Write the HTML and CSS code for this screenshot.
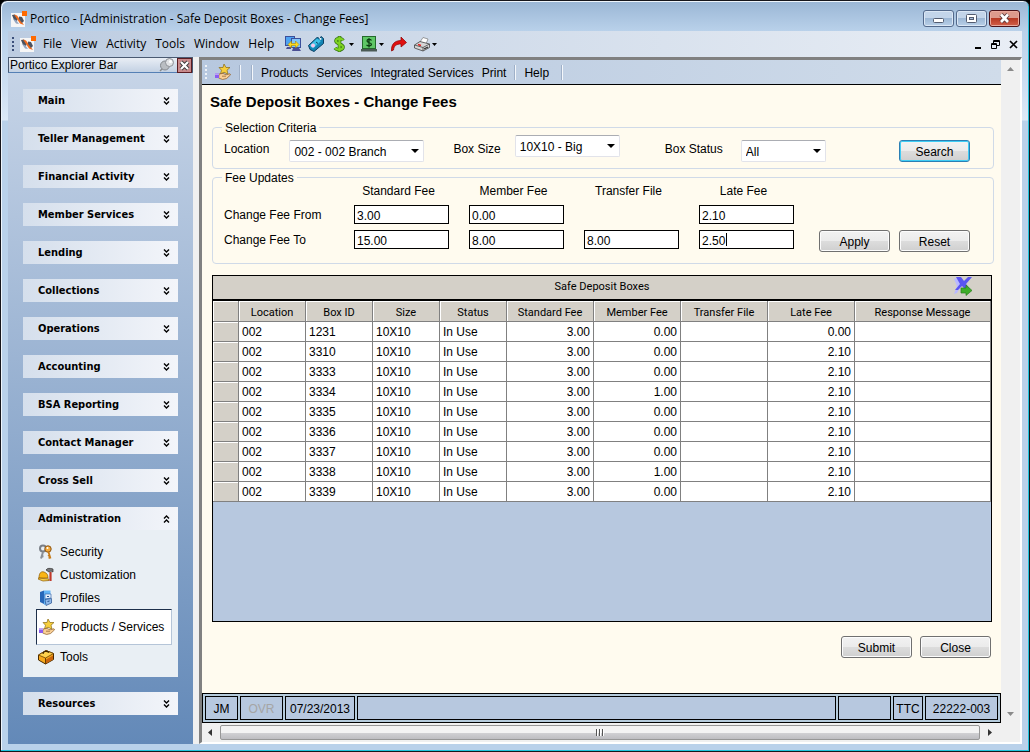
FILE: index.html
```
<!DOCTYPE html>
<html lang="en">
<head>
    <meta charset="UTF-8">
    <meta name="viewport" content="width=device-width, initial-scale=1.0">
    <title>Portico - Safe Deposit Boxes - Change Fees</title>
    <link rel="stylesheet" href="styles.css">
</head>
<body>
    <svg class="defs" width="0" height="0" aria-hidden="true">
        <symbol id="logo" viewBox="0 0 16 16">
            <rect x="0" y="2" width="14" height="14" fill="#f6f6f6"/>
            <path d="M1 4l3-.5 3 3.500-1 3-3-1z" fill="#4c525e"/>
            <path d="M2 8l3 1 3 4-3-.5z" fill="#93a5c0"/>
            <path d="M3 3.500l3 1 7 9.500-4-1.500z" fill="#f26a1b"/>
            <path d="M8 5.500l3 .5 2 4-2 2-3-4z" fill="#4c525e"/>
            <rect x="11" y="0" width="5" height="5" fill="#ff6a00"/>
        </symbol>
        <symbol id="star-hand" viewBox="0 0 16 16">
            <path d="M9 0l2 3.500h4l-3 2.700 1 4L9 8.200 5.500 10l1-3.800L4 3.500h4z" fill="#f7cf3d" stroke="#8a6a14" stroke-width=".7"/>
            <path d="M4 10l4-.6 3 1.400 4-1 .6 1-4 3.700-4 1-4-1.500z" fill="#f9cf96" stroke="#8a5a28" stroke-width=".7"/>
            <path d="M7 12.200h4" stroke="#8a5a28" stroke-width=".7"/>
            <rect x="0" y="9.500" width="4" height="4.500" fill="#8b5cf0"/>
            <rect x="0" y="9.500" width="4" height="1.500" fill="#b9a0f6"/>
        </symbol>
        <symbol id="chev-down" viewBox="0 0 7 8">
            <path d="M1 .5l2.500 2.500L6 .5M1 4.500L3.500 7 6 4.500" fill="none" stroke="#000" stroke-width="1.400"/>
        </symbol>
        <symbol id="chev-up" viewBox="0 0 7 8">
            <path d="M1 3.500L3.500 1 6 3.500M1 7.500L3.500 5 6 7.500" fill="none" stroke="#000" stroke-width="1.400"/>
        </symbol>
        <symbol id="arrow" viewBox="0 0 5 3">
            <path d="M0 0h5L2.500 3z" fill="#000"/>
        </symbol>
    </svg>

    <div class="window">
        <header class="title-bar">
            <svg class="icon"><use href="#logo"/></svg>
            <span class="title-text">Portico - [Administration - Safe Deposit Boxes - Change Fees]</span>
            <div class="window-buttons">
                <button class="window-button" aria-label="Minimize">
                    <svg width="29" height="15" viewBox="0 0 29 15"><rect x="9.500" y="7.500" width="10" height="4" rx="1" fill="#fff" stroke="#535c70"/></svg>
                </button>
                <button class="window-button" aria-label="Maximize">
                    <svg width="29" height="15" viewBox="0 0 29 15"><rect x="9.500" y="3.500" width="10" height="8" rx="1" fill="#fff" stroke="#535c70"/><rect x="12.500" y="6.500" width="4" height="2" fill="#a8bedb" stroke="#535c70"/></svg>
                </button>
                <button class="window-button close" aria-label="Close window">
                    <svg width="29" height="15" viewBox="0 0 29 15"><path d="M11 3.500l7 7.500M18 3.500l-7 7.500" stroke="#5b3a3c" stroke-width="4.500"/><path d="M11 3.500l7 7.500M18 3.500l-7 7.500" stroke="#fff" stroke-width="2.600"/></svg>
                </button>
            </div>
        </header>

        <nav class="menu-bar" aria-label="Main menu">
            <span class="grip"></span>
            <svg class="icon"><use href="#logo"/></svg>
            <div class="menu">
                <button>File</button>
                <button>View</button>
                <button>Activity</button>
                <button>Tools</button>
                <button>Window</button>
                <button>Help</button>
            </div>
            <div class="tools">
                <button aria-label="Transfer">
                    <svg class="icon" viewBox="0 0 16 16">
                        <rect x=".5" y=".5" width="9" height="9" fill="#4fa3f2" stroke="#3b4f9b"/>
                        <rect x="6.500" y="2.500" width="9" height="9" fill="#7fc4fa" stroke="#3b4f9b"/>
                        <path d="M2 11h4v2H1zM8 12h6l2 3H7z" fill="#4b4f94"/>
                        <path d="M3 8.500L6.500 5v2.500h4V5L14 8.500 10.500 12V9.500h-4V12z" fill="#ffd91a" stroke="#9c7a00" stroke-width=".5"/>
                    </svg>
                </button>
                <button aria-label="Tag">
                    <svg class="icon" viewBox="0 0 16 16">
                        <path d="M.5 9.500L9 1.500l3 1 1-2 2.500 2v5L6 15.500l-4-2z" fill="#1284b4" stroke="#0b3f63"/>
                        <path d="M1.500 9.500l7.500-7 4 2.500-8 7.500z" fill="#3fc0e4"/>
                        <circle cx="5" cy="9.500" r="2" fill="#f6c6e8"/>
                        <path d="M8 6l2 1.500" stroke="#0b3f63"/>
                        <path d="M11 1l3 2-2 1z" fill="#fff"/>
                    </svg>
                </button>
                <button aria-label="Money">
                    <svg class="icon" viewBox="0 0 16 16">
                        <path d="M12 4.500C11 2 5 2 5 5s7 3 7 6-6 3.500-8 1M8.500 0v16" fill="none" stroke="#2f6b12" stroke-width="3.600"/>
                        <path d="M12 4.500C11 2 5 2 5 5s7 3 7 6-6 3.500-8 1M8.500 .5v15" fill="none" stroke="#7ed321" stroke-width="2.200"/>
                    </svg>
                    <svg class="arrow"><use href="#arrow"/></svg>
                </button>
                <button aria-label="Cash">
                    <svg class="icon" viewBox="0 0 16 16">
                        <rect x="1.500" y=".5" width="13" height="12" fill="#5fc767" stroke="#24692c"/>
                        <path d="M10.500 4.500C9.500 3 6 3 6 5s4.500 1.500 4.500 3.300S7 10.300 5.500 9M8 2v9.500" fill="none" stroke="#0c3c12" stroke-width="1.200"/>
                        <path d="M0 13h16v2.500H0z" fill="#4a5a55"/>
                    </svg>
                    <svg class="arrow"><use href="#arrow"/></svg>
                </button>
                <button aria-label="Go to">
                    <svg class="icon" viewBox="0 0 16 16"><path d="M.5 15C0 8 4 4.500 10 4.500V1l5.500 5.500L10 11V8C5 8 3 10 2.500 14z" fill="#e01010" stroke="#8c0000" stroke-width=".7"/></svg>
                </button>
                <button aria-label="Print">
                    <svg class="icon" viewBox="0 0 16 16">
                        <path d="M6 6l3-4.500 5 1.500-2 5z" fill="#fff" stroke="#777" stroke-width=".7"/>
                        <path d="M.5 9L6 5.500l9.500 2.500v3.500L9 15 .5 12z" fill="#d6d6d6" stroke="#444" stroke-width=".8"/>
                        <path d="M.5 9L9 11.500l6.500-3.500M9 11.500V15" fill="none" stroke="#444" stroke-width=".8"/>
                        <path d="M4 8.500l3 1" stroke="#e02020" stroke-width="1.500"/>
                        <path d="M10 13l4-2" stroke="#2a2a2a" stroke-width="1.200"/>
                    </svg>
                    <svg class="arrow"><use href="#arrow"/></svg>
                </button>
            </div>
            <div class="child-buttons">
                <button aria-label="Minimize form"><svg width="9" height="9"><path d="M2 7h6v2H2z"/></svg></button>
                <button aria-label="Restore form"><svg width="9" height="9"><path d="M2.500 3V.5h6v5H6M2 1.500h7M.5 3.500h5v5h-5zM0 4.500h6" fill="none" stroke="#000"/></svg></button>
                <button aria-label="Close form"><svg width="9" height="9"><path d="M1 1l7 7M8 1L1 8" stroke="#000" stroke-width="1.700"/></svg></button>
            </div>
        </nav>

        <div class="content">
            <aside class="explorer">
                <div class="explorer-title">
                    <span>Portico Explorer Bar</span>
                    <button class="pin" aria-label="Pin">
                        <svg width="16" height="14" viewBox="0 0 16 14">
                            <path d="M4 10L1 13" stroke="#888" stroke-width="1.500"/>
                            <ellipse cx="6" cy="7.500" rx="4.500" ry="4.500" fill="#b9bdc2" stroke="#85898f"/>
                            <circle cx="10.500" cy="4.500" r="4" fill="#e1e3e6" stroke="#8d9197"/>
                            <circle cx="11.500" cy="3.500" r="1.500" fill="#fff"/>
                        </svg>
                    </button>
                    <button class="explorer-close" aria-label="Close explorer bar">
                        <svg width="13" height="13" viewBox="0 0 13 13"><path d="M3 3l7 7M10 3l-7 7" stroke="#3c3c3c" stroke-width="4"/><path d="M3 3l7 7M10 3l-7 7" stroke="#fff" stroke-width="2.200"/></svg>
                    </button>
                </div>
                <div class="groups">
                    <button class="group">Main<svg class="chevron"><use href="#chev-down"/></svg></button>
                    <button class="group">Teller Management<svg class="chevron"><use href="#chev-down"/></svg></button>
                    <button class="group">Financial Activity<svg class="chevron"><use href="#chev-down"/></svg></button>
                    <button class="group">Member Services<svg class="chevron"><use href="#chev-down"/></svg></button>
                    <button class="group">Lending<svg class="chevron"><use href="#chev-down"/></svg></button>
                    <button class="group">Collections<svg class="chevron"><use href="#chev-down"/></svg></button>
                    <button class="group">Operations<svg class="chevron"><use href="#chev-down"/></svg></button>
                    <button class="group">Accounting<svg class="chevron"><use href="#chev-down"/></svg></button>
                    <button class="group">BSA Reporting<svg class="chevron"><use href="#chev-down"/></svg></button>
                    <button class="group">Contact Manager<svg class="chevron"><use href="#chev-down"/></svg></button>
                    <button class="group">Cross Sell<svg class="chevron"><use href="#chev-down"/></svg></button>
                    <div>
                        <button class="group">Administration<svg class="chevron"><use href="#chev-up"/></svg></button>
                        <div class="group-body">
                            <a href="#">
                                <svg class="icon" viewBox="0 0 16 16">
                                    <circle cx="5" cy="4.500" r="3" fill="none" stroke="#7a7f86" stroke-width="2"/>
                                    <path d="M5 8L3 14.500M3.500 12l2 .5" stroke="#8a8f96" stroke-width="2"/>
                                    <circle cx="10" cy="5" r="3.200" fill="#f3a93a" stroke="#8e5410"/>
                                    <circle cx="9.500" cy="4" r="1" fill="#fff"/>
                                    <path d="M10.500 8l2 6.500M12 11l-2 1M12.500 13.500l-2 .5" stroke="#c77a16" stroke-width="1.800"/>
                                </svg>
                                Security
                            </a>
                            <a href="#">
                                <svg class="icon" viewBox="0 0 16 16">
                                    <path d="M1 11C1 6 3 4 6 5s4 3 4 6z" fill="#f9b516" stroke="#8c5a00" stroke-width=".7"/>
                                    <path d="M0 11l5 .5 6 .5v1.500L5 14l-5-2z" fill="#fbd04a" stroke="#8c5a00" stroke-width=".7"/>
                                    <path d="M8 3c1-2 4-2 7-1v3l-2-1-2 1z" fill="#777" stroke="#333" stroke-width=".7"/>
                                    <path d="M12.500 5v9" stroke="#c0392b" stroke-width="2.200"/>
                                </svg>
                                Customization
                            </a>
                            <a href="#">
                                <svg class="icon" viewBox="0 0 16 16">
                                    <path d="M2 2l4-1.500v13.500L2 12z" fill="#2766b8"/>
                                    <path d="M6 .5h6.500v12L6 15z" fill="#64b4f5"/>
                                    <path d="M7 4h6v4l-6 1z" fill="#e3eefb" stroke="#3b6cb0" stroke-width=".7"/>
                                    <path d="M7 9.500l6.500-1V13L8 15.500z" fill="#8fb8e9" stroke="#27518f" stroke-width=".7"/>
                                    <path d="M9 6.500h2M9.500 11.500l2-.5" stroke="#27518f"/>
                                </svg>
                                Profiles
                            </a>
                            <a href="#" class="current">
                                <svg class="icon"><use href="#star-hand"/></svg>
                                Products / Services
                            </a>
                            <a href="#">
                                <svg class="icon" viewBox="0 0 16 16">
                                    <path d="M.5 6L8 1.500l7.500 3v6L7.500 15 .5 11z" fill="#f7a81b" stroke="#4a2a00"/>
                                    <path d="M.5 6l7 3 8-4.500L8 1.500z" fill="#ffd24d" stroke="#6b3f00" stroke-width=".8"/>
                                    <path d="M7.500 9v6" stroke="#6b3f00"/>
                                    <path d="M5 5c0-2 3-4 6-1.500" fill="none" stroke="#3a2200" stroke-width="1.200"/>
                                    <path d="M8 10.500l7-4v4L8 14.500z" fill="#c9640c"/>
                                </svg>
                                Tools
                            </a>
                        </div>
                    </div>
                    <button class="group">Resources<svg class="chevron"><use href="#chev-down"/></svg></button>
                </div>
            </aside>

            <main class="form">
                <div class="form-page">
                    <div class="form-toolbar">
                        <span class="grip light"></span>
                        <svg class="icon"><use href="#star-hand"/></svg>
                        <span class="divider"></span>
                        <span class="divider"></span>
                        <div class="form-menu">
                            <button>Products</button>
                            <button>Services</button>
                            <button>Integrated Services</button>
                            <button>Print</button>
                        </div>
                        <span class="divider"></span>
                        <button>Help</button>
                        <span class="divider last"></span>
                    </div>

                    <div class="form-body">
                        <h1>Safe Deposit Boxes - Change Fees</h1>

                        <fieldset class="criteria">
                            <legend>Selection Criteria</legend>
                            <div class="criteria-row">
                                <label for="location">Location</label>
                                <span class="select location"><select id="location"><option>002 - 002 Branch</option></select></span>
                                <label for="boxSize">Box Size</label>
                                <span class="select size"><select id="boxSize"><option>10X10 - Big</option></select></span>
                                <label for="boxStatus">Box Status</label>
                                <span class="select status"><select id="boxStatus"><option>All</option></select></span>
                                <button class="btn focused">Search</button>
                            </div>
                        </fieldset>

                        <fieldset class="updates">
                            <legend>Fee Updates</legend>
                            <div class="fees">
                                <div class="fee-grid">
                                    <span></span>
                                    <span class="fee-name" id="std">Standard Fee</span>
                                    <span class="fee-name" id="mem">Member Fee</span>
                                    <span class="fee-name" id="trn">Transfer File</span>
                                    <span class="fee-name" id="late">Late Fee</span>

                                    <span id="from">Change Fee From</span>
                                    <input type="text" aria-labelledby="from std" value="3.00">
                                    <input type="text" aria-labelledby="from mem" value="0.00">
                                    <span></span>
                                    <input type="text" aria-labelledby="from late" value="2.10">

                                    <span id="to">Change Fee To</span>
                                    <input type="text" aria-labelledby="to std" value="15.00">
                                    <input type="text" aria-labelledby="to mem" value="8.00">
                                    <input type="text" aria-labelledby="to trn" value="8.00">
                                    <span class="editing"><input type="text" aria-labelledby="to late" value="2.50"></span>
                                </div>
                                <div class="fee-buttons">
                                    <button class="btn">Apply</button>
                                    <button class="btn">Reset</button>
                                </div>
                            </div>
                        </fieldset>

                        <section class="boxes">
                            <div class="boxes-title">
                                <span>Safe Deposit Boxes</span>
                                <button class="export" aria-label="Export">
                                    <svg width="20" height="20" viewBox="0 0 20 20">
                                        <path d="M1 3l5-2 4 5-6 11-3 1 3-8z" fill="#b9b9ff"/>
                                        <path d="M3 1h5l3 4 4-4h4l-6 7 4 5h-5l-3-3-4 4H2l5-6z" fill="#5a54f2"/>
                                        <path d="M8 12h5V9l6 5.500-6 5V17H8z" fill="#3fae2a" stroke="#2a7d1c" stroke-width=".7"/>
                                    </svg>
                                </button>
                            </div>
                            <table>
                                <colgroup>
                                    <col class="c-head"><col class="c-text"><col class="c-text"><col class="c-text"><col class="c-text"><col class="c-fee"><col class="c-fee"><col class="c-fee"><col class="c-fee"><col>
                                </colgroup>
                                <thead>
                                    <tr><th></th><th>Location</th><th>Box ID</th><th>Size</th><th>Status</th><th>Standard Fee</th><th>Member Fee</th><th>Transfer File</th><th>Late Fee</th><th>Response Message</th></tr>
                                </thead>
                                <tbody>
                                    <tr><th></th><td>002</td><td>1231</td><td>10X10</td><td>In Use</td><td class="num">3.00</td><td class="num">0.00</td><td></td><td class="num">0.00</td><td></td></tr>
                                    <tr><th></th><td>002</td><td>3310</td><td>10X10</td><td>In Use</td><td class="num">3.00</td><td class="num">0.00</td><td></td><td class="num">2.10</td><td></td></tr>
                                    <tr><th></th><td>002</td><td>3333</td><td>10X10</td><td>In Use</td><td class="num">3.00</td><td class="num">0.00</td><td></td><td class="num">2.10</td><td></td></tr>
                                    <tr><th></th><td>002</td><td>3334</td><td>10X10</td><td>In Use</td><td class="num">3.00</td><td class="num">1.00</td><td></td><td class="num">2.10</td><td></td></tr>
                                    <tr><th></th><td>002</td><td>3335</td><td>10X10</td><td>In Use</td><td class="num">3.00</td><td class="num">0.00</td><td></td><td class="num">2.10</td><td></td></tr>
                                    <tr><th></th><td>002</td><td>3336</td><td>10X10</td><td>In Use</td><td class="num">3.00</td><td class="num">0.00</td><td></td><td class="num">2.10</td><td></td></tr>
                                    <tr><th></th><td>002</td><td>3337</td><td>10X10</td><td>In Use</td><td class="num">3.00</td><td class="num">0.00</td><td></td><td class="num">2.10</td><td></td></tr>
                                    <tr><th></th><td>002</td><td>3338</td><td>10X10</td><td>In Use</td><td class="num">3.00</td><td class="num">1.00</td><td></td><td class="num">2.10</td><td></td></tr>
                                    <tr><th></th><td>002</td><td>3339</td><td>10X10</td><td>In Use</td><td class="num">3.00</td><td class="num">0.00</td><td></td><td class="num">2.10</td><td></td></tr>
                                </tbody>
                            </table>
                        </section>

                        <div class="form-actions">
                            <button class="btn">Submit</button>
                            <button class="btn">Close</button>
                        </div>
                    </div>

                    <footer class="status-bar">
                        <span class="s-user">JM</span>
                        <span class="s-ovr">OVR</span>
                        <span class="s-date">07/23/2013</span>
                        <span class="s-message"></span>
                        <span class="s-blank"></span>
                        <span class="s-mode">TTC</span>
                        <span class="s-branch">22222-003</span>
                    </footer>
                </div>

                <div class="v-scroll">
                    <svg width="7" height="4"><path d="M0 4h7L3.500 0z" fill="#8a8a8a"/></svg>
                    <svg width="7" height="4"><path d="M0 0h7L3.500 4z" fill="#8a8a8a"/></svg>
                </div>
                <div class="h-scroll">
                    <svg width="4" height="7"><path d="M4 0v7L0 3.500z" fill="#333"/></svg>
                    <div class="thumb"><i></i><i></i><i></i></div>
                    <svg width="4" height="7"><path d="M0 0v7l4-3.500z" fill="#333"/></svg>
                </div>
            </main>
        </div>
    </div>
</body>
</html>
```
FILE: styles.css
```
* {
    box-sizing: border-box;
}
body {
    margin: 0;
    background: #000;
    font-family: "Liberation Sans", Arial, sans-serif;
    font-size: 12px;
    line-height: 16px;
    color: #000;
}
button {
    background: none;
    border: none;
    padding: 0;
    font: inherit;
    color: inherit;
    cursor: pointer;
}
a {
    color: inherit;
    text-decoration: none;
}
svg {
    display: block;
    flex: none;
}
.defs {
    position: absolute;
}
.icon {
    width: 16px;
    height: 16px;
}

/* window frame */
.window {
    display: flex;
    flex-direction: column;
    min-height: 100vh;
    border: 1px solid #16161c;
    border-radius: 7px 7px 0 0;
    box-shadow: inset -1px -1px 0 #1fc3dd, inset 1px 1px 0 #eef5fc;
    background: linear-gradient(#9ab6d5, #b9d1ea 30px, #cfe0f3 90px, #dce9f7 119px, #b9d1ea 120px);
    padding: 1px 7px 7px;
}
.title-bar {
    display: flex;
    align-items: center;
    height: 29px;
    padding: 4px 2px 0 3px;
    font-family: "Open Sans", "Segoe UI", sans-serif;
}
.title-text {
    margin-left: 3px;
}
.window-buttons {
    display: flex;
    gap: 2px;
    margin-left: auto;
}
.window-button {
    border: 1px solid #53698b;
    border-radius: 3px;
    box-shadow: inset 0 0 0 1px #dbe7f5;
    background: linear-gradient(#c3d5ea 50%, #9db8d6 50%, #b9d0e8);
}
.window-button.close {
    border-color: #4c1218;
    box-shadow: inset 0 0 0 1px #e9a99c;
    background: linear-gradient(#dd9a8c 50%, #b83a24 50%, #d1604a);
}

/* main menu */
.menu-bar {
    display: flex;
    align-items: center;
    height: 26px;
    padding: 0 4px;
    background: linear-gradient(90deg, #bccce1, #e9eef5);
    font-family: "Open Sans", "Segoe UI", sans-serif;
}
.grip {
    width: 2px;
    height: 14px;
    margin-right: 6px;
    background: repeating-linear-gradient(#3b4f7a 0 2px, transparent 2px 4px);
}
.grip.light {
    margin-right: 8px;
    background: repeating-linear-gradient(#eef2f7 0 2px, transparent 2px 4px);
}
.menu {
    display: flex;
    gap: 9px;
    margin-left: 7px;
}
.tools {
    display: flex;
    gap: 7px;
    margin-left: 11px;
}
.tools button {
    display: flex;
    align-items: center;
    gap: 2px;
}
.arrow {
    width: 5px;
    height: 3px;
}
.child-buttons {
    display: flex;
    gap: 9px;
    margin-left: auto;
}
.content {
    display: flex;
    flex: 1;
    background: #f0f0f0;
}

/* explorer bar */
.explorer {
    display: flex;
    flex-direction: column;
    width: 185px;
    margin-right: 6px;
}
.explorer-title {
    display: flex;
    align-items: center;
    height: 16px;
    border: 1px solid #4a5a72;
    border-bottom-color: #5580b5;
    background: linear-gradient(#e9eef5, #c3d1e3);
    padding-left: 1px;
}
.explorer-close {
    margin-left: 2px;
    border: 1px solid #5a1c22;
    background: #c98a8c;
}
.pin {
    margin-left: auto;
}
.groups {
    display: flex;
    flex-direction: column;
    gap: 15px;
    flex: 1;
    padding: 16px 15px;
    background: linear-gradient(#c6d4e7, #6389b8);
}
.group {
    display: flex;
    align-items: center;
    justify-content: space-between;
    width: 100%;
    height: 23px;
    padding: 0 8px 0 15px;
    background: linear-gradient(90deg, #d5dfec, #f3f5fa);
    font-family: "DejaVu Sans Condensed", Tahoma, sans-serif;
    font-size: 11px;
    font-weight: bold;
}
.chevron {
    width: 7px;
    height: 8px;
}
.group-body {
    padding: 10px 6px 9px 13px;
    background: #e9eff4;
}
.group-body a {
    display: flex;
    align-items: center;
    gap: 6px;
    height: 23px;
    padding-left: 2px;
    white-space: nowrap;
}
.group-body a.current {
    height: 36px;
    border: 1px solid #b5c5d8;
    border-top-color: #1d2f4a;
    border-left-color: #1d2f4a;
    background: #fff;
}

/* form window */
.form {
    display: grid;
    grid-template-columns: 1fr 19px;
    grid-template-rows: 1fr 19px;
    flex: 1;
    border: solid #808080;
    border-width: 3px 0 0 3px;
    border-right: 2px solid #fff;
    border-bottom: 2px solid #fff;
}
.form-page {
    display: flex;
    flex-direction: column;
    background: #fffbef;
}
.form-toolbar {
    display: flex;
    align-items: center;
    height: 25px;
    padding-left: 3px;
    border-bottom: 1px solid #000;
    background: linear-gradient(90deg, #b7c8df, #d0dcea);
}
.form-toolbar button {
    padding-top: 2px;
}
.form-menu {
    display: flex;
    gap: 8px;
}
.divider {
    width: 2px;
    height: 15px;
    margin: 0 8px;
    border-left: 1px solid #9fb0c8;
    background: #f4f7fb;
}
.divider + .divider {
    margin-left: 2px;
}
.divider.last {
    margin-left: 12px;
}
.form-body {
    display: flex;
    flex-direction: column;
    flex: 1;
    padding: 9px 7px 0 10px;
}
h1 {
    margin: 0 0 9px -2px;
    font-size: 15px;
    line-height: 16px;
}
fieldset {
    min-width: 0;
    margin: 0;
    padding: 0 23px 0 11px;
    border: 1px solid #d0dae8;
    border-radius: 4px;
}
legend {
    margin-left: -2px;
    padding: 3px 3px 0;
    line-height: 13px;
}
.criteria {
    height: 50px;
}
.criteria-row {
    display: flex;
    align-items: flex-end;
    height: 27px;
}
.criteria-row label {
    align-self: center;
}
.select {
    position: relative;
    height: 22px;
}
.select::after {
    content: "";
    position: absolute;
    right: 5px;
    top: 9px;
    border: 4px solid transparent;
    border-top: 4px solid #000;
    border-bottom: none;
}
.select select {
    width: 100%;
    height: 22px;
    appearance: none;
    padding: 2px 4px 0;
    border: 1px solid #e2e3ea;
    border-top-color: #abadb3;
    border-radius: 2px;
    background: #fff;
    font: inherit;
    color: #000;
}
.location {
    width: 135px;
    margin: 0 29px 0 20px;
}
.size {
    align-self: flex-start;
    width: 105px;
    margin: 0 45px 0 14px;
}
.status {
    width: 85px;
    margin-left: 18px;
}
.btn {
    width: 71px;
    height: 22px;
    padding-top: 2px;
    border: 1px solid #707070;
    border-radius: 3px;
    box-shadow: inset 0 0 0 1px #fcfcfc;
    background: linear-gradient(#f2f2f2, #ebebeb 50%, #dddddd 50%, #cfcfcf);
}
.btn.focused {
    margin-left: auto;
    border-color: #2c7fb4;
    box-shadow: inset 0 0 0 1px #3fcdf5;
}
.updates {
    height: 95px;
    margin-bottom: 11px;
}
.fees {
    display: flex;
    align-items: flex-end;
    justify-content: space-between;
}
.fee-grid {
    display: grid;
    grid-template-columns: 110px repeat(4, 95px);
    grid-template-rows: 14px 19px 19px;
    align-items: center;
    column-gap: 20px;
    row-gap: 6px;
    padding-bottom: 3px;
}
.fee-name {
    margin-top: -2px;
    margin-right: 6px;
    text-align: center;
}
.fee-grid input {
    width: 95px;
    height: 19px;
    padding: 2px 2px 0;
    border: 1px solid #000;
    background: #fff;
    font: inherit;
}
.editing {
    display: flex;
    position: relative;
}
.editing::after {
    content: "";
    position: absolute;
    left: 27px;
    top: 3px;
    width: 1px;
    height: 13px;
    background: #000;
}
.fee-buttons {
    display: flex;
    gap: 9px;
}

/* grid */
.boxes {
    flex: 1;
    min-height: 347px;
    max-height: 347px;
    margin-right: 2px;
    border: 1px solid #000;
    background: #b7c8df;
}
.boxes-title {
    display: flex;
    align-items: center;
    justify-content: center;
    position: relative;
    height: 25px;
    padding-bottom: 2px;
    border-bottom: 2px solid #000;
    background: #d4d0c8;
    font-family: Roboto, sans-serif;
    font-size: 11px;
}
.export {
    position: absolute;
    right: 18px;
    top: 0;
}
table {
    width: 100%;
    table-layout: fixed;
    border-collapse: separate;
    border-spacing: 0;
}
.c-head {
    width: 26px;
}
.c-text {
    width: 67px;
}
.c-fee {
    width: 87px;
}
th, td {
    height: 20px;
    padding: 2px 3px 0;
    border-right: 1px solid #808080;
    border-bottom: 1px solid #808080;
    line-height: 17px;
    white-space: nowrap;
}
td {
    background: #fff;
}
th {
    background: #d4d0c8;
    box-shadow: inset 1px 1px 0 #fff;
    font-family: Roboto, sans-serif;
    font-size: 11px;
    font-weight: normal;
}
thead th {
    height: 21px;
}
.num {
    text-align: right;
}
.form-actions {
    display: flex;
    justify-content: flex-end;
    gap: 8px;
    padding: 14px 3px 20px 0;
}

/* status bar */
.status-bar {
    display: flex;
    gap: 2px;
    height: 30px;
    padding: 2px;
    border: 1px solid #000;
    background: #b5cbdc;
}
.status-bar span {
    border: 1px solid #000;
    background: #b7c8df;
    padding-top: 4px;
    text-align: center;
}
.s-user {
    width: 33px;
}
.status-bar .s-ovr {
    width: 43px;
    color: #a5a5a5;
}
.s-date {
    width: 70px;
}
.s-message {
    flex: 1;
}
.s-blank {
    width: 53px;
}
.s-mode {
    width: 30px;
}
.s-branch {
    width: 73px;
}

/* scrollbars */
.v-scroll {
    display: flex;
    flex-direction: column;
    align-items: center;
    justify-content: space-between;
    padding: 7px 0;
    background: #f0f0f0;
}
.h-scroll {
    display: flex;
    align-items: center;
    gap: 8px;
    padding-left: 6px;
    padding-right: 10px;
    background: #f0f0f0;
}
.h-scroll {
    grid-column: 1 / -1;
    padding-right: 28px;
}
.thumb {
    display: flex;
    align-items: center;
    justify-content: center;
    gap: 1px;
    flex: 1;
    height: 15px;
    border: 1px solid #979797;
    border-radius: 2px;
    background: linear-gradient(#f3f3f3 50%, #d2d2d5 50%, #bdbdc1);
}
.thumb i {
    width: 2px;
    height: 7px;
    border-left: 1px solid #555;
    background: #fff;
}
```
